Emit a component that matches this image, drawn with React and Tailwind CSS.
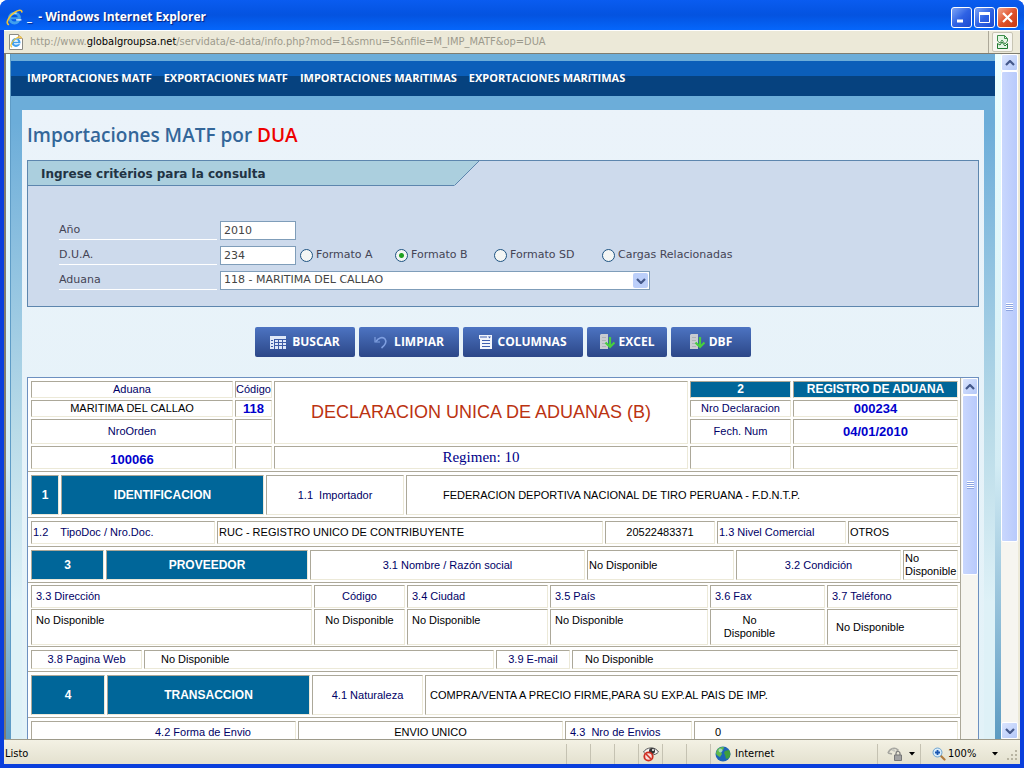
import { clsx } from 'clsx'

const navItems = ['IMPORTACIONES MATF', 'EXPORTACIONES MATF', 'IMPORTACIONES MARíTIMAS', 'EXPORTACIONES MARíTIMAS']

const formatos = [
  { id: 'a', label: 'Formato A', width: 'w-[95px]' },
  { id: 'b', label: 'Formato B', width: 'w-[99px]' },
  { id: 'sd', label: 'Formato SD', width: 'w-[108px]' },
  { id: 'cr', label: 'Cargas Relacionadas', width: '' },
]

/* Icons */

function IeLogo({ className }) {
  return (
    <svg viewBox="0 0 16 16" className={className} aria-hidden="true">
      <circle cx="8" cy="8.5" r="4.6" fill="none" stroke="#3f9fee" strokeWidth="2.8" />
      <path d="M3.5 8.7h9.5" stroke="#3f9fee" strokeWidth="2" />
      <path d="M9.5 10.3h5" stroke="#eef4ff" strokeWidth="1.2" />
      <path d="M5 5.5a4.6 4.6 0 0 1 5-1.3" fill="none" stroke="#b9e2ff" strokeWidth="1.2" />
      <path d="M2.2 14.6C-.6 13 3 6.5 8 3.2c3.500-2.400 7-3 6.900-.4" fill="none" stroke="#f3c432" strokeWidth="1.5" strokeLinecap="round" />
    </svg>
  )
}

function PageIcon() {
  return (
    <span className="relative flex h-4 w-4 items-center justify-center">
      <svg viewBox="0 0 16 16" className="absolute inset-0 h-4 w-4" aria-hidden="true">
        <path d="M1.500.5h9l4 4v11h-13z" fill="#fff" stroke="#8b8b84" />
        <path d="M10.500.5v4h4" fill="#f3d9c8" stroke="#b09a8a" />
      </svg>
      <IeLogo className="relative h-3 w-3" />
    </span>
  )
}

function BrokenPageIcon() {
  return (
    <svg viewBox="0 0 12 14" className="h-[14px] w-[12px]" fill="none" aria-hidden="true">
      <path d="M.5 6V.5h7l3 3V6" fill="#e4f5e4" stroke="#3d8f4a" />
      <path d="M7.500.5v3h3" stroke="#3d8f4a" />
      <path d="M.5 6l2.500 2 2-3 3 4 2.500-3" stroke="#3d8f4a" />
      <path d="M.5 8.500v5h10v-5l-2.500 2.500-3-4-2 3z" fill="#e4f5e4" stroke="#1f7a2e" />
    </svg>
  )
}

function GridIcon() {
  return (
    <svg viewBox="0 0 16 13" className="h-[13px] w-4" aria-hidden="true">
      <path d="M0 0h16v13H0z" fill="#dfe8f8" />
      <path d="M4 3.500h12M4 6.500h12M4 9.500h12M4.500 3v10M8.500 3v10M12.500 3v10M1 4.500h2M1 7.500h2M1 10.500h2" stroke="#3d5ca6" />
    </svg>
  )
}

function UndoIcon() {
  return (
    <svg viewBox="0 0 14 14" className="h-[14px] w-[14px]" fill="none" stroke="#7f9fe0" aria-hidden="true">
      <path d="M1 2v5h5" strokeWidth="1.200" />
      <path d="M2 6.500C4.500 2.500 9 1.500 11 4c2 2.500.5 6-3.500 9" strokeWidth="1.600" />
    </svg>
  )
}

function SheetIcon() {
  return (
    <svg viewBox="0 0 14 14" className="h-[14px] w-[14px]" aria-hidden="true">
      <path d="M0 0h13v4H0zM1 4h12v10H1z" fill="#f2f5fc" />
      <path d="M1 2h7M3 5.500h8M3 8.500h8M3 11.500h8" stroke="#3f5fae" />
      <path d="M9 1.500h3l-1.500 2z" fill="#3f5fae" />
    </svg>
  )
}

function ExportIcon() {
  return (
    <svg viewBox="0 0 15 16" className="h-4 w-[15px]" aria-hidden="true">
      <path d="M1 0h7v15H0V1z" fill="#c9ccd0" />
      <path d="M2 3.500h4M2 6.500h4M2 9.500h4M2 12.500h4" stroke="#aeb2b8" />
      <path d="M10 3v10M5.500 8.500l4.500 4.500 4.500-4.500" fill="none" stroke="#47cf3d" strokeWidth="2.200" />
    </svg>
  )
}

function BlockedEyeIcon() {
  return (
    <svg viewBox="0 0 16 16" className="h-4 w-4" fill="none" aria-hidden="true">
      <path d="M.5 6C3.500 1 12 0 15.500 6c-3 4-12 4-15 0z" fill="#f4f4f4" stroke="#555" />
      <circle cx="9" cy="5" r="3" fill="#333" />
      <circle cx="10" cy="4" r="1" fill="#fff" />
      <circle cx="5.500" cy="10.500" r="4.200" fill="#f8dcd8" stroke="#cf2d20" strokeWidth="1.800" />
      <path d="M3 8l5 5" stroke="#cf2d20" strokeWidth="1.600" />
    </svg>
  )
}

function GlobeIcon() {
  return (
    <svg viewBox="0 0 16 16" className="h-4 w-4" aria-hidden="true">
      <circle cx="8" cy="8" r="7.500" fill="#1d64b8" />
      <path d="M2 4C4 1 8 .5 9 1.500L8 4 6 6l1 2-2 3C2 10 1 8 1 7z" fill="#5fba4d" />
      <path d="M10 5l4-1c2 3 1.500 6 0 8l-3 1-1-4-1-2z" fill="#3f9e3d" />
      <circle cx="5.500" cy="4.500" r="2" fill="#cfeaff" opacity=".6" />
    </svg>
  )
}

function LockIcon() {
  return (
    <svg viewBox="0 0 16 16" className="h-4 w-4" fill="none" aria-hidden="true">
      <path d="M1 7C3 2 8 1 11 4l-2 2M1 7l4 1" stroke="#a6a6a0" strokeWidth="1.600" />
      <path d="M5 3.500L8 5" stroke="#c8c8c0" strokeWidth="2" />
      <path d="M9 9V7.500a2 2 0 0 1 4 0V9" stroke="#777" strokeWidth="1.200" />
      <path d="M7.500 9h7v5.500h-7z" fill="#a2a2a2" stroke="#777" />
    </svg>
  )
}

function ZoomIcon() {
  return (
    <svg viewBox="0 0 14 14" className="h-[14px] w-[14px]" fill="none" aria-hidden="true">
      <path d="M8.500 8.500l4 4" stroke="#b07a3c" strokeWidth="2.200" strokeLinecap="round" />
      <circle cx="5.500" cy="5.500" r="4.500" fill="#d8ecfb" stroke="#6fa4d0" />
      <path d="M5.500 3v5M3 5.500h5" stroke="#1a56b0" strokeWidth="1.800" />
    </svg>
  )
}

function Caret() {
  return (
    <svg viewBox="0 0 6 4" className="h-1 w-1.5" aria-hidden="true">
      <path d="M0 0h6L3 3.500z" fill="#000" />
    </svg>
  )
}

function Chevron({ down }) {
  return (
    <svg viewBox="0 0 10 6" className="h-1.5 w-2.5" fill="none" aria-hidden="true">
      <path d={down ? 'M1 1l4 4 4-4' : 'M1 5l4-4 4 4'} stroke="#44588a" strokeWidth="2.200" />
    </svg>
  )
}

/* Scroll bars */

function ScrollButton({ down, label }) {
  return (
    <button
      aria-label={label}
      className="flex h-[17px] w-full shrink-0 items-center justify-center rounded-xs border border-white bg-linear-to-br from-[#dbe5fe] to-[#b4c8f8]">
      <Chevron down={down} />
    </button>
  )
}

function ScrollThumb({ className }) {
  return (
    <div className={clsx('flex flex-col items-center justify-center rounded-xs border border-white bg-linear-to-r from-[#c9d7fd] to-[#b8cafc]', className)}>
      {[0, 1, 2, 3].map((i) => (
        <span key={i} className="h-0.5 w-[7px] border-b border-[#8ca4e0] bg-white"></span>
      ))}
    </div>
  )
}

function WindowButton({ label, close, children }) {
  return (
    <button
      aria-label={label}
      className={clsx(
        'flex h-[21px] w-[21px] items-center justify-center rounded-[3px] border border-white',
        close ? 'bg-linear-to-br from-[#f0a58c] via-[#e0512a] to-[#c63a12]' : 'bg-linear-to-br from-[#7fa4f5] via-[#2f62e4] to-[#1b4ad0]'
      )}>
      <svg viewBox="0 0 13 13" className="h-[13px] w-[13px]" fill="none" stroke="#fff" aria-hidden="true">
        {children}
      </svg>
    </button>
  )
}

/* Report pieces */

function Section({ cols, children, first, tight }) {
  return (
    <div className={clsx('pt-px pl-px', !first && 'border-t border-[#aca899]')}>
      <table className={clsx('w-full table-fixed border-separate', tight ? 'border-spacing-x-[2px] border-spacing-y-px' : 'border-spacing-[2px]')}>
        <colgroup>
          {cols.map((c, i) => <col key={i} className={c} />)}
        </colgroup>
        <tbody>{children}</tbody>
      </table>
    </div>
  )
}

const box = 'border border-t-[#aca899] border-l-[#aca899] border-r-[#ece9d8] border-b-[#ece9d8] p-0'

function Label({ className = 'text-center', ...props }) {
  return <th className={clsx(box, 'font-normal text-[#000066]', className)} {...props} />
}

function Value({ className, ...props }) {
  return <td className={clsx(box, className)} {...props} />
}

function Strong({ className, ...props }) {
  return <td className={clsx(box, 'text-center text-[13px] font-bold text-[#0000cc]', className)} {...props} />
}

function Head({ ...props }) {
  return <th className={clsx(box, 'bg-[#006699] text-center text-[12px] font-bold text-white')} {...props} />
}

function Report() {
  return (
    <div className="min-w-0 flex-1 border-r border-[#aca899] font-[Liberation_Sans,sans-serif] text-[11px] leading-[13px] text-black">
      <Section first cols={['w-[202px]', 'w-[37px]', '', 'w-[101px]', 'w-[165px]']}>
        <tr className="h-[17px]">
          <Label>Aduana</Label>
          <Label>Código</Label>
          <td rowSpan={3} className={clsx(box, 'text-center text-[18px] text-[#bb3311]')}>
            DECLARACION UNICA DE ADUANAS (B)
          </td>
          <Head>2</Head>
          <Head>REGISTRO DE ADUANA</Head>
        </tr>
        <tr className="h-[17px]">
          <Value className="text-center">MARITIMA DEL CALLAO</Value>
          <Strong>118</Strong>
          <Label>Nro Declaracion</Label>
          <Strong>000234</Strong>
        </tr>
        <tr className="h-[25px]">
          <Label>NroOrden</Label>
          <Value></Value>
          <Label>Fech. Num</Label>
          <Strong>04/01/2010</Strong>
        </tr>
        <tr className="h-[23px]">
          <Strong className="pt-1">100066</Strong>
          <Value></Value>
          <Value className="text-center font-[Liberation_Serif,serif] text-[15px] text-[#000088]">Regimen: 10</Value>
          <Value></Value>
          <Value></Value>
        </tr>
      </Section>

      <Section cols={['w-[28px]', 'w-[203px]', 'w-[138px]', '']}>
        <tr className="h-[40px]">
          <Head>1</Head>
          <Head>IDENTIFICACION</Head>
          <Label>1.1 &nbsp;Importador</Label>
          <Value className="pl-9">FEDERACION DEPORTIVA NACIONAL DE TIRO PERUANA - F.D.N.T.P.</Value>
        </tr>
      </Section>

      <Section cols={['w-[184px]', 'w-[386px]', 'w-[110px]', 'w-[129px]', '']}>
        <tr className="h-[23px]">
          <Label className="pl-px text-left">1.2 &nbsp;&nbsp; TipoDoc / Nro.Doc.</Label>
          <Value className="pl-px">RUC - REGISTRO UNICO DE CONTRIBUYENTE</Value>
          <Value className="text-center">20522483371</Value>
          <Label className="pl-px text-left">1.3 Nivel Comercial</Label>
          <Value className="pl-px">OTROS</Value>
        </tr>
      </Section>

      <Section cols={['w-[73px]', 'w-[202px]', 'w-[275px]', 'w-[147px]', 'w-[165px]', '']}>
        <tr className="h-[30px]">
          <Head>3</Head>
          <Head>PROVEEDOR</Head>
          <Label>3.1 Nombre / Razón social</Label>
          <Value className="pl-px">No Disponible</Value>
          <Label>3.2 Condición</Label>
          <Value className="pl-px">No Disponible</Value>
        </tr>
      </Section>

      <Section tight cols={['w-[281px]', 'w-[91px]', 'w-[141px]', 'w-[158px]', 'w-[115px]', '']}>
        <tr className="h-[23px]">
          <Label className="pl-1 text-left">3.3 Dirección</Label>
          <Label>Código</Label>
          <Label className="pl-1 text-left">3.4 Ciudad</Label>
          <Label className="pl-1 text-left">3.5 País</Label>
          <Label className="pl-1 text-left">3.6 Fax</Label>
          <Label className="pl-1 text-left">3.7 Teléfono</Label>
        </tr>
        <tr className="h-[36px]">
          <Value className="pt-1 pl-1 align-top">No Disponible</Value>
          <Value className="pt-1 text-center align-top">No Disponible</Value>
          <Value className="pt-1 pl-1 align-top">No Disponible</Value>
          <Value className="pt-1 pl-1 align-top">No Disponible</Value>
          <Value className="pr-11 pl-2 text-center">No Disponible</Value>
          <Value className="pl-2">No Disponible</Value>
        </tr>
      </Section>

      <Section cols={['w-[111px]', 'w-[350px]', 'w-[74px]', '']}>
        <tr className="h-[19px]">
          <Label>3.8 Pagina Web</Label>
          <Value className="pl-4">No Disponible</Value>
          <Label>3.9 E-mail</Label>
          <Value className="pl-3">No Disponible</Value>
        </tr>
      </Section>

      <Section cols={['w-[74px]', 'w-[203px]', 'w-[111px]', '']}>
        <tr className="h-[40px]">
          <Head>4</Head>
          <Head>TRANSACCION</Head>
          <Label>4.1 Naturaleza</Label>
          <Value className="pl-1">COMPRA/VENTA A PRECIO FIRME,PARA SU EXP.AL PAIS DE IMP.</Value>
        </tr>
      </Section>

      <Section cols={['w-[265px]', 'w-[265px]', 'w-[127px]', '']}>
        <tr className="h-[23px]">
          <Label className="pr-11 text-right">4.2 Forma de Envio</Label>
          <Value className="text-center">ENVIO UNICO</Value>
          <Label className="pl-1 text-left">4.3 &nbsp;Nro de Envios</Label>
          <Value className="pl-5">0</Value>
        </tr>
      </Section>
    </div>
  )
}

function Field({ id, label, children }) {
  return (
    <div className="flex h-[25px] items-end">
      <label htmlFor={id} className="mr-[3px] h-full w-[158px] border-b border-white pt-2 leading-[14px]">{label}</label>
      {children}
    </div>
  )
}

function ActionButton({ icon, width, children }) {
  return (
    <button className={clsx('flex h-[30px] items-center justify-center rounded-xs bg-linear-to-b from-[#4d74c2] to-[#2c4788] font-[Open_Sans,sans-serif] text-[12px] font-bold text-white', width)}>
      {icon}
      {children}
    </button>
  )
}

function Criteria() {
  const input = 'h-[19px] border border-[#7f9db9] bg-white pl-[3px] text-[11px] text-[#444444]'
  return (
    <form onSubmit={(e) => e.preventDefault()}>
      <div className="h-[147px] border border-[#5d86ae] bg-[#cddaec] font-[DejaVu_Sans,sans-serif] text-[11px] text-[#444455]">
        <div className="flex h-[25px]">
          <h2 className="w-[426px] border-b border-[#5d86ae] bg-[#abcfde] pl-[13px] text-[12px] leading-[26px] font-bold text-[#223344]">
            Ingrese critérios para la consulta
          </h2>
          <svg viewBox="0 0 25 25" className="h-[25px] w-[25px]" aria-hidden="true">
            <path d="M0 0h25L0 25z" fill="#abcfde" />
            <path d="M25 0L.5 24.500" stroke="#5d86ae" />
          </svg>
        </div>
        <div className="pt-[29px] pl-[31px]">
          <Field id="anio" label="Año">
            <input id="anio" defaultValue="2010" className={clsx(input, 'w-[76px]')} />
          </Field>
          <Field id="dua" label="D.U.A.">
            <input id="dua" defaultValue="234" className={clsx(input, 'w-[76px]')} />
            <div className="ml-1 flex h-[19px] items-center">
              {formatos.map((f) => (
                <label key={f.id} className={clsx('flex items-center gap-[3px] whitespace-nowrap', f.width)}>
                  <input
                    type="radio"
                    name="formato"
                    defaultChecked={f.id === 'b'}
                    className="h-[13px] w-[13px] appearance-none rounded-full border border-[#1d5281] bg-[#f4f6f4] checked:bg-[radial-gradient(circle,#21a121_2px,#f4f6f4_3px)]" />
                  {f.label}
                </label>
              ))}
            </div>
          </Field>
          <Field id="aduana" label="Aduana">
            <div className="relative">
              <select id="aduana" className={clsx(input, 'block w-[430px] appearance-none')}>
                <option>118 - MARITIMA DEL CALLAO</option>
              </select>
              <span className="pointer-events-none absolute top-0.5 right-0.5 flex h-[15px] w-[15px] items-center justify-center rounded-xs bg-[#bccffa]">
                <Chevron down />
              </span>
            </div>
          </Field>
        </div>
      </div>
      <div className="flex justify-center gap-1 py-5">
        <ActionButton width="w-[100px] gap-1.5" icon={<GridIcon />}>BUSCAR</ActionButton>
        <ActionButton width="w-[100px] gap-1.5" icon={<UndoIcon />}>LIMPIAR</ActionButton>
        <ActionButton width="w-[120px] gap-1" icon={<SheetIcon />}>COLUMNAS</ActionButton>
        <ActionButton width="w-[80px] gap-1" icon={<ExportIcon />}>EXCEL</ActionButton>
        <ActionButton width="w-[80px] gap-1" icon={<ExportIcon />}>DBF</ActionButton>
      </div>
    </form>
  )
}

export default function App() {
  return (
    <div className="flex h-screen flex-col overflow-hidden rounded-t-lg bg-[#0a3fdc]">

      {/* Title bar */}
      <header className="flex h-[30px] shrink-0 items-center bg-linear-to-b from-[#0a5cf0] via-[#0453e0] to-[#0566fb] pt-1 pr-1.5 pl-1.5">
        <IeLogo className="h-[17px] w-[17px]" />
        <h1 className="ml-1 flex-1 font-[Open_Sans,sans-serif] text-[12px] font-bold text-white [text-shadow:1px_1px_1px_#0a1f7a]">_ &nbsp;- Windows Internet Explorer</h1>
        <div className="flex gap-0.5">
          <WindowButton label="Minimizar"><path d="M2 10h6" strokeWidth="3" /></WindowButton>
          <WindowButton label="Maximizar"><path d="M1.500 2v9.500h10V2" /><path d="M1 2.500h11" strokeWidth="3" /></WindowButton>
          <WindowButton label="Cerrar" close><path d="M2 2l9 9M11 2l-9 9" strokeWidth="2.200" /></WindowButton>
        </div>
      </header>

      <div className="mx-1 mb-1 flex min-h-0 flex-1 flex-col bg-[#ece9d8]">

        {/* Address bar */}
        <div className="flex h-[23px] shrink-0 items-center border-t border-white pl-1 font-[DejaVu_Sans_Condensed,sans-serif] text-[11px]">
          <PageIcon />
          <p className="ml-1.5 flex-1 text-[#9c9a8c]">
            http://www.<span className="text-black">globalgroupsa.net</span>/servidata/e-data/info.php?mod=1&amp;smnu=5&amp;nfile=M_IMP_MATF&amp;op=DUA
          </p>
          <div className="flex h-full items-center border-l border-[#aca899] pr-[7px] pl-[3px]">
            <button aria-label="Vista de compatibilidad" className="flex h-5 w-[21px] items-center justify-center rounded-xs border border-[#c8c5b4] bg-[#f7f6f0]">
              <BrokenPageIcon />
            </button>
          </div>
        </div>

        {/* Page */}
        <div className="flex min-h-0 flex-1 border-t border-l-2 border-[#7f7d70]">
          <main className="flex min-w-0 flex-1 flex-col overflow-hidden bg-linear-to-b from-[#ecffff] via-[#d3ecf4] via-60% to-[#5c9bc2] pr-1.5 pl-1">
            <div className="flex min-h-0 flex-1 flex-col border-l border-[#5f9cc6] bg-linear-to-b from-[#6cadd9] from-10% via-[#b9dbe8] via-55% to-[#def1f7] to-80% pt-[7px]">
              <nav className="flex h-[35px] shrink-0 items-center gap-3 bg-linear-to-b from-[#0b5eb9] from-43% to-[#06427f] to-43% pl-4">
                {navItems.map((item) => (
                  <a key={item} href="#" className="font-[Open_Sans,sans-serif] text-[11px] font-bold text-white">{item}</a>
                ))}
              </nav>
              <div className="mx-[11px] mt-[14px] flex min-h-0 flex-1 flex-col bg-linear-to-b from-[#ebf3fa] to-[#e2f2f8] px-[5px]">
                <h2 className="h-[50px] shrink-0 font-[Open_Sans,sans-serif] text-[19px] leading-[50px] font-semibold text-[#336699]">
                  Importaciones MATF por <span className="text-[#ee0000]">DUA</span>
                </h2>
                <Criteria />

                {/* Results */}
                <section className="flex min-h-0 flex-1 overflow-hidden border border-b-0 border-[#6d90c0] bg-white">
                  <Report />
                  <div className="flex w-[17px] flex-col bg-[#f6f5f0] pl-px">
                    <ScrollButton label="Subir resultados" />
                    <ScrollThumb className="h-[180px]" />
                  </div>
                </section>
              </div>
            </div>
          </main>
          <div className="mr-0.5 flex w-[17px] shrink-0 flex-col bg-[#f6f5f0]">
            <ScrollButton label="Subir" />
            <ScrollThumb className="h-[471px]" />
            <div className="flex-1"></div>
            <ScrollButton down label="Bajar" />
          </div>
        </div>

        {/* Status bar */}
        <footer className="flex h-[25px] shrink-0 items-center border-t border-[#9d9a8a] bg-linear-to-b from-[#f3f1e4] to-[#e4e1cf] pt-1 font-[DejaVu_Sans_Condensed,sans-serif] text-[11px] text-black">
          <span className="flex-1 pl-px">Listo</span>
          <span className="h-5 w-6 border-l border-[#c5c2b2]"></span>
          <span className="h-5 w-6 border-l border-[#c5c2b2]"></span>
          <span className="h-5 w-6 border-l border-[#c5c2b2]"></span>
          <span className="flex h-5 w-6 items-center justify-center border-l border-[#c5c2b2]"><BlockedEyeIcon /></span>
          <span className="h-5 w-6 border-l border-[#c5c2b2]"></span>
          <span className="h-5 w-6 border-l border-[#c5c2b2]"></span>
          <span className="flex h-5 w-[167px] items-center gap-1 border-l border-[#c5c2b2] pl-1"><GlobeIcon />Internet</span>
          <span className="flex h-5 w-[43px] items-center gap-1.5 border-l border-[#c5c2b2] pl-[9px]"><LockIcon /><Caret /></span>
          <span className="flex h-5 w-[86px] items-center border-l border-[#c5c2b2] pl-[11px]">
            <ZoomIcon />
            <span className="mr-4 ml-0.5">100%</span>
            <Caret />
          </span>
          <svg viewBox="0 0 12 12" className="mt-1 mr-0.5 h-3 w-3" fill="#b8b4a2" aria-hidden="true">
            <path d="M9 0h2v2H9zM5 4h2v2H5zM9 4h2v2H9zM1 8h2v2H1zM5 8h2v2H5zM9 8h2v2H9z" />
          </svg>
        </footer>
      </div>
    </div>
  )
}
